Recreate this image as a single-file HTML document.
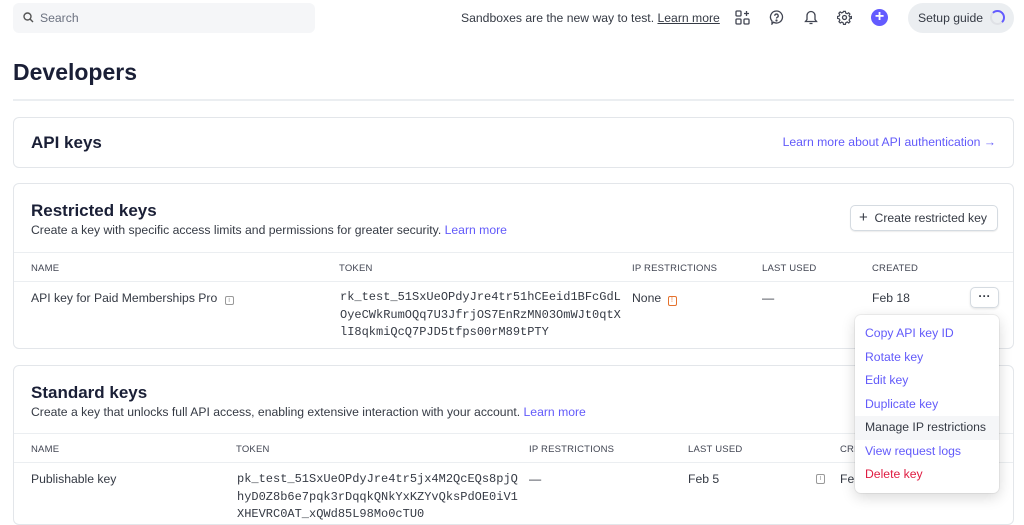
<!DOCTYPE html>
<html><head><style>
*{box-sizing:border-box;margin:0;padding:0}
body{width:1024px;height:509px;overflow:hidden;background:#fff;font-family:"Liberation Sans",sans-serif;color:#353a44;position:relative;font-size:12.2px}
.a{position:absolute}
.card{position:absolute;left:13px;width:1001px;border:1px solid #e3e6ea;border-radius:6px;background:#fff}
.h{font-weight:bold;color:#1a1f36}
.link{color:#625afa}
.th{position:absolute;font-size:9.5px;color:#414552;letter-spacing:.2px}
.mono{font-family:"Liberation Mono",monospace;font-size:12px;line-height:17.5px;color:#353a44}
.line{position:absolute;left:0;right:0;height:1px;background:#ebeef1}
.menu div{height:23.5px;line-height:23.5px;padding-left:10px;color:#625afa;font-size:12.2px}
</style></head><body>
<div class="a" style="left:13px;top:3px;width:302px;height:30px;background:#f5f6f8;border-radius:6px"></div>
<svg class="a" style="left:23px;top:12px" width="11" height="11" viewBox="0 0 11 11"><circle cx="4.5" cy="4.5" r="3.5" fill="none" stroke="#555" stroke-width="1.4"/><path d="M7 7l3 3" stroke="#555" stroke-width="1.4"/></svg>
<div class="a" style="left:40px;top:11px;color:#6c7280">Search</div>
<div class="a" style="left:461px;top:11px">Sandboxes are the new way to test. <span style="text-decoration:underline">Learn more</span></div>
<svg class="a" style="left:735px;top:10px" width="15" height="15" viewBox="0 0 15 15" fill="none" stroke="#414552" stroke-width="1.3"><rect x="1" y="1" width="5" height="5" rx="1"/><rect x="1" y="9" width="5" height="5" rx="1"/><rect x="9" y="9" width="5" height="5" rx="1"/><path d="M11.5 1v5M9 3.5h5"/></svg>
<svg class="a" style="left:769px;top:10px" width="15" height="15" viewBox="0 0 15 15" fill="none" stroke="#414552" stroke-width="1.3"><path d="M7.5 1a6 6 0 1 1 -3 11.2L3 14V11A6 6 0 0 1 7.5 1z"/><path d="M5.8 5.8a1.7 1.7 0 1 1 2.4 1.5c-.5.3-.7.6-.7 1.2"/><circle cx="7.5" cy="10.5" r=".5" fill="#414552"/></svg>
<svg class="a" style="left:804px;top:10px" width="14" height="15" viewBox="0 0 14 15" fill="none" stroke="#414552" stroke-width="1.3"><path d="M7 1.5a4 4 0 0 0-4 4v4l-1.5 2h11L11 9.5v-4a4 4 0 0 0-4-4zM5.5 13.5h3"/></svg>
<svg class="a" style="left:837px;top:10px" width="15" height="15" viewBox="0 0 15 15" fill="none" stroke="#414552" stroke-width="1.3"><circle cx="7.5" cy="7.5" r="2"/><path d="M6.5 1h2l.4 1.8 1.5.7 1.6-1 1.4 1.4-1 1.6.7 1.5L15 6.5v2l-1.8.4-.7 1.5 1 1.6-1.4 1.4-1.6-1-1.5.7L8.5 15h-2l-.4-1.8-1.5-.7-1.6 1L1.6 12.1l1-1.6-.7-1.5L0 8.5v-2l1.8-.4.7-1.5-1-1.6L2.9 1.6l1.6 1 1.5-.7z" transform="scale(.93) translate(.5 .5)"/></svg>
<div class="a" style="left:871px;top:9px;width:17px;height:17px;border-radius:50%;background:#635bff;color:#fff;text-align:center;line-height:16px;font-size:16px;font-weight:bold">+</div>
<div class="a" style="left:908px;top:3px;width:106px;height:30px;background:#ebeef1;border-radius:15px"></div>
<div class="a" style="left:918px;top:11px">Setup guide</div>
<div class="a" style="left:990px;top:10px;width:15px;height:15px;border-radius:50%;border:2px solid #dfe1e6;border-top-color:#635bff;border-right-color:#635bff"></div>

<div class="a h" style="left:13px;top:59px;font-size:23px">Developers</div>
<div class="a" style="left:13px;top:99px;width:1001px;height:2px;background:#ebeef1"></div>

<div class="card" style="top:117px;height:51px">
<div class="a h" style="left:17px;top:15px;font-size:17px">API keys</div>
<div class="a link" style="right:17px;top:17px">Learn more about API authentication →</div>
</div>

<div class="card" style="top:183px;height:166px">
<div class="a h" style="left:17px;top:17px;font-size:17px">Restricted keys</div>
<div class="a" style="left:17px;top:39px">Create a key with specific access limits and permissions for greater security. <span class="link">Learn more</span></div>
<div class="a" style="left:836px;top:21px;width:148px;height:26px;border:1px solid #d5dbe1;border-radius:5px;box-shadow:0 1px 1px rgba(0,0,0,.08);padding-left:8px;line-height:24px;color:#353a44"><span style="font-size:15px">+</span>&nbsp; Create restricted key</div>
<div class="line" style="top:68px"></div>
<div class="th" style="left:17px;top:79px">NAME</div>
<div class="th" style="left:325px;top:79px">TOKEN</div>
<div class="th" style="left:618px;top:79px">IP RESTRICTIONS</div>
<div class="th" style="left:748px;top:79px">LAST USED</div>
<div class="th" style="left:858px;top:79px">CREATED</div>
<div class="line" style="top:97px"></div>
<div class="a" style="left:17px;top:107px">API key for Paid Memberships Pro <span style="display:inline-block;width:9px;height:9px;border:1px solid #999;border-radius:2px;font-size:7px;line-height:8px;text-align:center;color:#999;margin-left:4px">i</span></div>
<div class="a mono" style="left:326px;top:105px">rk_test_51SxUeOPdyJre4tr51hCEeid1BFcGdL<br>OyeCWkRumOQq7U3JfrjOS7EnRzMN03OmWJt0qtX<br>lI8qkmiQcQ7PJD5tfps00rM89tPTY</div>
<div class="a" style="left:618px;top:107px">None <span style="display:inline-block;width:9px;height:10px;border:1px solid #e5722d;border-radius:2px;font-size:7px;line-height:8px;text-align:center;color:#e5722d;margin-left:3px">!</span></div>
<div class="a" style="left:748px;top:107px">—</div>
<div class="a" style="left:858px;top:107px">Feb 18</div>
<div class="a" style="left:956px;top:103px;width:29px;height:21px;border:1px solid #d5dbe1;border-radius:5px;text-align:center;line-height:16px;font-weight:bold;box-shadow:0 1px 2px rgba(0,0,0,.1)">···</div>
</div>

<div class="card" style="top:365px;height:160px">
<div class="a h" style="left:17px;top:17px;font-size:17px">Standard keys</div>
<div class="a" style="left:17px;top:39px">Create a key that unlocks full API access, enabling extensive interaction with your account. <span class="link">Learn more</span></div>
<div class="line" style="top:67px"></div>
<div class="th" style="left:17px;top:78px">NAME</div>
<div class="th" style="left:222px;top:78px">TOKEN</div>
<div class="th" style="left:515px;top:78px">IP RESTRICTIONS</div>
<div class="th" style="left:674px;top:78px">LAST USED</div>
<div class="th" style="left:826px;top:78px">CRE</div>
<div class="line" style="top:96px"></div>
<div class="a" style="left:17px;top:106px">Publishable key</div>
<div class="a mono" style="left:223px;top:105px">pk_test_51SxUeOPdyJre4tr5jx4M2QcEQs8pjQ<br>hyD0Z8b6e7pqk3rDqqkQNkYxKZYvQksPdOE0iV1<br>XHEVRC0AT_xQWd85L98Mo0cTU0</div>
<div class="a" style="left:515px;top:106px">—</div>
<div class="a" style="left:674px;top:106px">Feb 5</div>
<div class="a" style="left:802px;top:108px;width:9px;height:10px;border:1px solid #999;border-radius:2px;font-size:7px;line-height:8px;text-align:center;color:#999">i</div>
<div class="a" style="left:826px;top:106px">Feb</div>
</div>

<div class="a menu" style="left:855px;top:315px;width:144px;height:178px;background:#fff;border-radius:6px;box-shadow:0 4px 14px rgba(0,0,0,.16),0 0 0 1px rgba(0,0,0,.05);padding-top:7px">
<div>Copy API key ID</div><div>Rotate key</div><div>Edit key</div><div>Duplicate key</div>
<div style="background:#f5f6f8;color:#353a44">Manage IP restrictions</div>
<div>View request logs</div><div style="color:#df1b41">Delete key</div>
</div>
</body></html>
